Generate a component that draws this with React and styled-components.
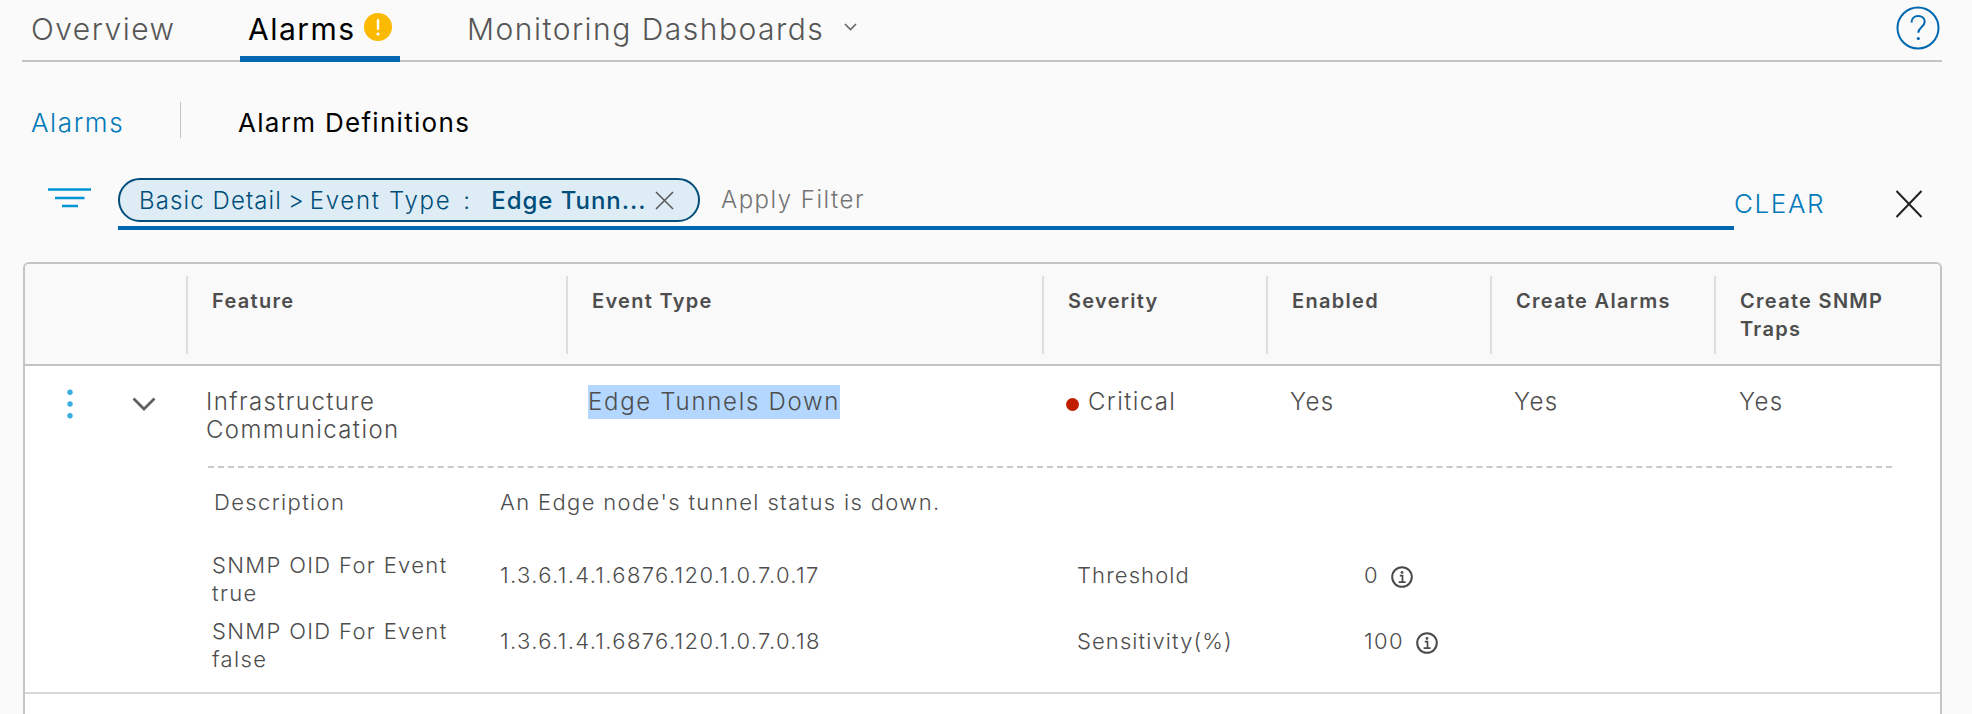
import styled, { createGlobalStyle } from "styled-components";

const GlobalStyle = createGlobalStyle`
  html, body {
    margin: 0;
    background: #fafafa;
    font-family: "Inter", "Liberation Sans", sans-serif;
    overflow: hidden;
  }
`
const Page = styled.div`
  width: 1972px;
  height: 714px;
  padding: 0 30px 0 22px;
  box-sizing: border-box;
`
const TabBar = styled.div`
  height: 62px;
  display: flex;
  align-items: flex-start;
  border-bottom: 2px solid #c4c4c4;
  box-sizing: border-box;
`
const Tab = styled.div`
  height: 62px;
  box-sizing: border-box;
  display: flex;
  align-items: center;
  padding-top: 2px;
  font-size: 30px;
  font-weight: ${p => (p.$active ? 400 : 300)};
  letter-spacing: 1.5px;
  white-space: nowrap;
  color: ${p => (p.$active ? "#000" : "#565656")};
  margin-left: ${p => p.$left}px;
  width: ${p => p.$width}px;
  padding-left: ${p => p.$pad}px;
  border-bottom: 6px solid ${p => (p.$active ? "#0068b0" : "transparent")};
`
const Badge = styled.svg`
  width: 28px;
  height: 28px;
  margin: -4px 0 0 8px;
`
const TabCaret = styled.svg`
  width: 13px;
  height: 8px;
  margin: -4px 0 0 20px;
`
const HelpButton = styled.svg`
  width: 44px;
  height: 44px;
  margin: 6px 2px 0 auto;
`
const SubTabs = styled.div`
  display: flex;
  align-items: flex-start;
  height: 36px;
  margin-top: 40px;
  font-size: 26px;
`
const SubLink = styled.span`
  color: #0079b8;
  font-weight: 300;
  margin-left: 9px;
  width: 149px;
  height: 36px;
  line-height: 41px;
  border-right: 1px solid #c4c4c4;
  letter-spacing: 1.6px;
`
const SubActive = styled.span`
  color: #000;
  margin-left: 57px;
  line-height: 41px;
  letter-spacing: 1.3px;
`
const FilterRow = styled.div`
  display: flex;
  align-items: flex-start;
  margin-top: 40px;
  height: 52px;
`
const FilterIcon = styled.svg`
  width: 44px;
  height: 20px;
  margin: 10px 26px 0;
`
const FilterField = styled.div`
  width: 1616px;
  height: 52px;
  box-sizing: border-box;
  display: flex;
  align-items: flex-start;
  border-bottom: 4px solid #0068b0;
`
const Chip = styled.div`
  width: 582px;
  height: 44px;
  box-sizing: border-box;
  border: 2px solid #004d7a;
  border-radius: 22px;
  background: #deedf5;
  color: #004d7a;
  display: flex;
  align-items: center;
  padding-left: 19px;
  font-size: 24px;
  font-weight: 300;
  white-space: nowrap;
  letter-spacing: 1.1px;
`
const ChipSep = styled.span`
  margin: 0 5px 0 6px;
`
const ChipType = styled.span`
  letter-spacing: 1.7px;
`
const ChipColon = styled.span`
  margin: 0 20px 0 12px;
`
const ChipValue = styled.span`
  font-weight: 500;
  letter-spacing: 0.95px;
`
const ChipClose = styled.svg`
  width: 19px;
  height: 19px;
  margin-left: 9px;
`
const FilterHint = styled.span`
  margin-left: 21px;
  font-size: 24px;
  font-weight: 300;
  line-height: 44px;
  color: #737373;
  letter-spacing: 1.5px;
`
const ClearButton = styled.span`
  margin: 10px 0 0 0;
  font-size: 26px;
  font-weight: 300;
  color: #0079b8;
  width: 161px;
  letter-spacing: 1.6px;
`
const CloseIcon = styled.svg`
  width: 28px;
  height: 28px;
  margin-top: 12px;
`
const Table = styled.div`
  margin-top: 32px;
  margin-left: 1px;
  border: 2px solid #c4c4c4;
  border-bottom: none;
  border-radius: 6px 6px 0 0;
  height: 452px;
  box-sizing: border-box;
  background: #fff;
`
const HeadRow = styled.div`
  display: grid;
  grid-template-columns: 161px 380px 476px 224px 224px 224px 1fr;
  height: 102px;
  box-sizing: border-box;
  padding-top: 12px;
  background: #f9f9f9;
  border-bottom: 2px solid #c4c4c4;
  border-radius: 4px 4px 0 0;
`
const HeadCell = styled.div`
  height: 78px;
  box-sizing: border-box;
  padding: 11px 20px 0 24px;
  font-size: 20px;
  font-weight: 600;
  line-height: 28px;
  letter-spacing: 1.3px;
  color: #4d4d4d;
  border-left: ${p => (p.$first ? "none" : "2px solid #dedede")};
`
const RowGroup = styled.div`
  border-bottom: 2px solid #d7d7d7;
`
const BodyRow = styled.div`
  display: grid;
  grid-template-columns: 161px 380px 476px 224px 224px 224px 1fr;
  height: 100px;
  box-sizing: border-box;
  font-size: 24px;
  font-weight: 300;
  line-height: 28px;
  letter-spacing: 1.4px;
  color: #4d4d4d;
  padding-top: 22px;
`
const ActionCell = styled.div`
  display: flex;
  align-items: flex-start;
`
const Kebab = styled.svg`
  width: 8px;
  height: 32px;
  margin: 0 0 0 41px;
`
const Chevron = styled.svg`
  width: 24px;
  height: 14px;
  margin: 9px 0 0 58px;
`
const Cell = styled.div`
  padding-left: ${p => p.$pad}px;
`
const Selected = styled.span`
  background: #b3d7ff;
  display: inline-block;
  height: 34px;
  line-height: 34px;
  margin-top: -3px;
  letter-spacing: 1.7px;
`
const Dot = styled.span`
  display: inline-block;
  width: 13px;
  height: 13px;
  border-radius: 50%;
  background: #c21d00;
  margin-right: 9px;
  vertical-align: -1px;
`
const Detail = styled.div`
  margin: 0 48px 0 183px;
  border-top: 2px dashed #c9c9c9;
  height: 226px;
  box-sizing: border-box;
  display: grid;
  grid-template-columns: 288px 577px 287px 1fr;
  grid-template-rows: 78px 66px 66px;
  font-size: 22px;
  font-weight: 300;
  line-height: 28px;
  letter-spacing: 1.35px;
  color: #4d4d4d;
  padding: 0 0 0 4px;
`
const DetailCell = styled.div`
  align-self: center;
  padding-bottom: ${p => p.$lift || 0}px;
`
const DetailLabel = styled(DetailCell)`
  margin-left: 2px;
`
const MeasureLabel = styled(DetailCell)`
  letter-spacing: 1.1px;
`
const DetailSpan = styled.div`
  grid-column: 2 / 5;
  align-self: center;
  padding-bottom: 10px;
`
const ValueWrap = styled.div`
  display: flex;
  align-items: center;
  gap: 12px;
  padding-bottom: 8px;
`
const InfoIcon = styled.svg`
  width: 22px;
  height: 22px;
  margin-top: 4px;
`

const Info = () => (
  <InfoIcon viewBox="0 0 22 22" fill="none">
    <circle cx="11" cy="11" r="9.8" stroke="#4a4a4a" strokeWidth="2" />
    <circle cx="11" cy="6.4" r="1.4" fill="#4a4a4a" />
    <path d="M8.8 9.6h2.7v6M7.6 16.2h7" stroke="#4a4a4a" strokeWidth="1.7" />
  </InfoIcon>
)

const columns = ["Feature", "Event Type", "Severity", "Enabled", "Create Alarms", "Create SNMP Traps"]

export default function App() {
  return (
    <Page>
      <GlobalStyle />
      <TabBar>
        <Tab $left={9} $width={209}>Overview</Tab>
        <Tab $active $width={160} $pad={8}>
          Alarms
          <Badge viewBox="0 0 28 28">
            <circle cx="14" cy="14" r="14" fill="#fbb900" />
            <rect x="12.8" y="6" width="2.4" height="11" rx="1.2" fill="#fff" />
            <circle cx="14" cy="21" r="1.6" fill="#fff" />
          </Badge>
        </Tab>
        <Tab $left={67}>
          Monitoring Dashboards
          <TabCaret viewBox="0 0 13 8" fill="none">
            <path d="M1 1l5.5 5.5L12 1" stroke="#666" strokeWidth="1.6" />
          </TabCaret>
        </Tab>
        <HelpButton viewBox="0 0 44 44" fill="none">
          <circle cx="22" cy="22" r="20.5" stroke="#0068b0" strokeWidth="2" />
          <path d="M15.5 16.5c0-4 3-6.5 6.7-6.5s6.5 2.4 6.5 5.8c0 5-6.4 5.4-6.4 11" stroke="#0068b0" strokeWidth="2" />
          <circle cx="22.3" cy="32.5" r="1.6" fill="#0068b0" />
        </HelpButton>
      </TabBar>
      <SubTabs>
        <SubLink>Alarms</SubLink>
        <SubActive>Alarm Definitions</SubActive>
      </SubTabs>
      <FilterRow>
        <FilterIcon viewBox="0 0 44 20" fill="none">
          <path d="M0 1.5h43M7 10h29.500M14 18h16" stroke="#0095d3" strokeWidth="2.6" />
        </FilterIcon>
        <FilterField>
          <Chip>
            <span>Basic Detail</span>
            <ChipSep>&gt;</ChipSep>
            <ChipType>Event Type</ChipType>
            <ChipColon>:</ChipColon>
            <ChipValue>Edge Tunn...</ChipValue>
            <ChipClose viewBox="0 0 19 19" fill="none">
              <path d="M1 1l17 17M18 1 1 18" stroke="#555" strokeWidth="1.5" />
            </ChipClose>
          </Chip>
          <FilterHint>Apply Filter</FilterHint>
        </FilterField>
        <ClearButton>CLEAR</ClearButton>
        <CloseIcon viewBox="0 0 28 28" fill="none">
          <path d="M1.500 1l25 26M26.500 1l-25 26" stroke="#222" strokeWidth="2" />
        </CloseIcon>
      </FilterRow>
      <Table>
        <HeadRow>
          <HeadCell $first />
          {columns.map(c => <HeadCell key={c}>{c}</HeadCell>)}
        </HeadRow>
        <RowGroup>
          <BodyRow>
            <ActionCell>
              <Kebab viewBox="0 0 8 32">
                <circle cx="4" cy="4.300" r="2.700" fill="#3aaee0" />
                <circle cx="4" cy="16" r="2.700" fill="#3aaee0" />
                <circle cx="4" cy="27.700" r="2.700" fill="#3aaee0" />
              </Kebab>
              <Chevron viewBox="0 0 24 14" fill="none">
                <path d="M1.500 1.500 12 12 22.500 1.500" stroke="#606060" strokeWidth="2.800" />
              </Chevron>
            </ActionCell>
            <Cell $pad={20}>Infrastructure<br />Communication</Cell>
            <Cell $pad={22}><Selected>Edge Tunnels Down</Selected></Cell>
            <Cell $pad={24}><Dot />Critical</Cell>
            <Cell $pad={24}>Yes</Cell>
            <Cell $pad={24}>Yes</Cell>
            <Cell $pad={25}>Yes</Cell>
          </BodyRow>
          <Detail>
            <DetailLabel $lift={10}>Description</DetailLabel>
            <DetailSpan>An Edge node's tunnel status is down.</DetailSpan>
            <DetailCell>SNMP OID For Event<br />true</DetailCell>
            <DetailCell $lift={8}>1.3.6.1.4.1.6876.120.1.0.7.0.17</DetailCell>
            <MeasureLabel $lift={8}>Threshold</MeasureLabel>
            <ValueWrap>0<Info /></ValueWrap>
            <DetailCell>SNMP OID For Event<br />false</DetailCell>
            <DetailCell $lift={8}>1.3.6.1.4.1.6876.120.1.0.7.0.18</DetailCell>
            <MeasureLabel $lift={8}>Sensitivity(%)</MeasureLabel>
            <ValueWrap>100<Info /></ValueWrap>
          </Detail>
        </RowGroup>
      </Table>
    </Page>
  );
}
